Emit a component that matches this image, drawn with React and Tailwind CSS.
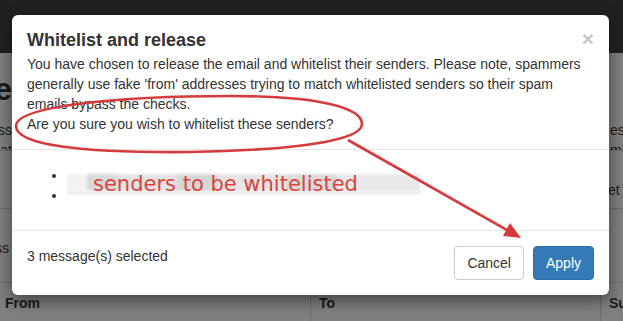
import React from "react";

export default function App() {
  const font = { fontFamily: '"Liberation Sans", Arial, sans-serif' };
  return (
    <div className="relative w-[623px] h-[321px] overflow-hidden text-[14px] leading-[20px] text-[#1a1a1a]" style={font}>
      {/* Background page (dimmed by backdrop) */}
      <div className="flex flex-col h-full">
        <div className="h-[53px] bg-[#212121]" />
        <div className="flex-1 flex flex-col bg-[#7f7f7f]">
          <div className="h-[97px] flex justify-between">
            <div className="w-[12px] overflow-hidden flex flex-col items-end">
              <div className="mt-[22px] h-[28px] text-[32px] leading-[28px] font-bold whitespace-nowrap">ge</div>
              <div className="mt-[17px] whitespace-nowrap">ss</div>
              <div className="whitespace-nowrap">at</div>
            </div>
            <div className="w-[13px] overflow-hidden flex flex-col">
              <div className="mt-[67px] whitespace-nowrap">es to</div>
              <div className="whitespace-nowrap">me</div>
            </div>
          </div>
          <div className="h-[58px] border-t border-[#6c6c6c] flex justify-end">
            <div className="w-[15px] overflow-hidden pt-[29px] whitespace-nowrap">et</div>
          </div>
          <div className="h-[74px] border-t border-[#6c6c6c] flex">
            <div className="w-[9px] overflow-hidden flex justify-end pt-[29px] whitespace-nowrap">ss</div>
          </div>
          <div className="flex-1 border-t border-[#6c6c6c] flex font-bold">
            <div className="w-[311px] border-r border-[#6c6c6c] pl-[5px] pt-[10px]">From</div>
            <div className="w-[290px] border-r border-[#6c6c6c] pl-[8px] pt-[10px]">To</div>
            <div className="flex-1 pl-[8px] pt-[10px] whitespace-nowrap overflow-hidden">Subject</div>
          </div>
        </div>
      </div>

      {/* Modal */}
      <div className="absolute left-[12px] top-[15px] w-[597px] bg-white rounded-[6px] shadow-[0_5px_15px_rgba(0,0,0,0.5)] text-[#333]">
        <div className="p-[15px] border-b border-[#e5e5e5]">
          <div className="flex justify-between items-start">
            <h4 className="text-[18px] leading-[20px] font-bold">Whitelist and release</h4>
            <button className="text-[21px] leading-[21px] font-bold text-[#c4c4c4] -mt-[2px]">×</button>
          </div>
          <p className="mt-[4px]">
            You have chosen to release the email and whitelist their senders. Please note, spammers
            <br />
            generally use fake 'from' addresses trying to match whitelisted senders so their spam
            <br />
            emails bypass the checks.
            <br />
            Are you sure you wish to whitelist these senders?
          </p>
        </div>
        <div className="p-[15px] border-b border-[#e5e5e5]">
          <ul className="list-disc pl-[40px] mb-[10px]">
            <li className="relative">
              &nbsp;
              <div className="absolute left-0 top-[9px] h-[17px] w-[353px] bg-[#e6e6e6] blur-[1.5px] flex">
                <div className="w-[20px] bg-[#f2f2f2]" />
                <div className="w-[30px] bg-[#d9d9d9]" />
                <div className="w-[60px] bg-[#e3e3e3]" />
                <div className="w-[40px] bg-[#d6d6d6]" />
                <div className="w-[70px] bg-[#e4e4e4]" />
                <div className="w-[50px] bg-[#dadada]" />
                <div className="w-[83px] bg-[#e8e8e8]" />
              </div>
            </li>
            <li className="relative">
              &nbsp;
              <div className="absolute left-0 top-[6px] h-[4px] w-[353px] bg-[#eeeeee] blur-[1px]" />
            </li>
          </ul>
        </div>
        <div className="p-[15px] flex justify-between items-start">
          <div>3 message(s) selected</div>
          <div className="flex gap-[9px]">
            <button className="h-[34px] px-[12px] border border-[#ccc] rounded-[4px] bg-white text-[#333] text-[14px]">Cancel</button>
            <button className="h-[34px] px-[12px] border border-[#2e6da4] rounded-[4px] bg-[#337ab7] text-white text-[14px]">Apply</button>
          </div>
        </div>
      </div>

      {/* Annotation text */}
      <div
        className="absolute left-[93px] top-[172px] text-[21px] leading-[24px] text-[#d9443f] whitespace-nowrap"
        style={{ fontFamily: '"DejaVu Sans", sans-serif' }}
      >
        senders to be whitelisted
      </div>

      {/* Annotation drawing */}
      <svg className="absolute inset-0 pointer-events-none" width="623" height="321" viewBox="0 0 623 321">
        <path
          d="M 16 126 C 16 106, 120 96, 230 96 C 320 96, 362 108, 362 124 C 362 140, 300 150, 190 152 C 80 153, 16 145, 16 126 Z"
          fill="none"
          stroke="#d63a3a"
          strokeWidth="2.6"
        />
        <line x1="348" y1="140" x2="512" y2="233" stroke="#d63a3a" strokeWidth="2.6" />
        <polygon points="521,238 503,236 510,223" fill="#d63a3a" />
      </svg>
    </div>
  );
}
